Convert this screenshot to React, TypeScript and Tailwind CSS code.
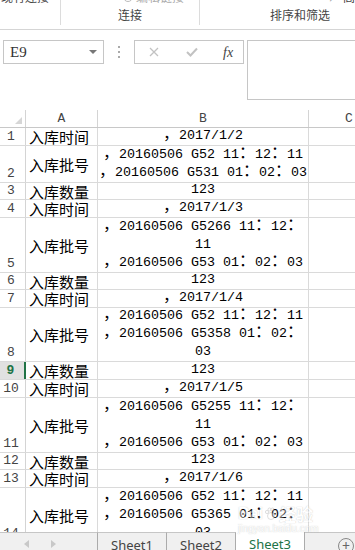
import React from "react";

type Row = { n: number; h: string; a: string; b: string[]; sel?: boolean };

const rows: Row[] = [
  { n: 1, h: "h-[18px]", a: "入库时间", b: ["，2017/1/2"] },
  { n: 2, h: "h-[37px]", a: "入库批号", b: ["，20160506 G52 11：12：11", "，20160506 G531 01：02：03"] },
  { n: 3, h: "h-[17px]", a: "入库数量", b: ["123"] },
  { n: 4, h: "h-[18px]", a: "入库时间", b: ["，2017/1/3"] },
  { n: 5, h: "h-[55px]", a: "入库批号", b: ["，20160506 G5266 11：12：", "11", "，20160506 G53 01：02：03"] },
  { n: 6, h: "h-[17px]", a: "入库数量", b: ["123"] },
  { n: 7, h: "h-[18px]", a: "入库时间", b: ["，2017/1/4"] },
  { n: 8, h: "h-[54px]", a: "入库批号", b: ["，20160506 G52 11：12：11", "，20160506 G5358 01：02：", "03"] },
  { n: 9, h: "h-[18px]", a: "入库数量", b: ["123"], sel: true },
  { n: 10, h: "h-[18px]", a: "入库时间", b: ["，2017/1/5"] },
  { n: 11, h: "h-[55px]", a: "入库批号", b: ["，20160506 G5255 11：12：", "11", "，20160506 G53 01：02：03"] },
  { n: 12, h: "h-[17px]", a: "入库数量", b: ["123"] },
  { n: 13, h: "h-[18px]", a: "入库时间", b: ["，2017/1/6"] },
  { n: 14, h: "h-[55px]", a: "入库批号", b: ["，20160506 G52 11：12：11", "，20160506 G5365 01：02：", "03"] },
];

// half-width chars in mono, full-width ones a bit bigger in the CJK font
function Line({ s }: { s: string }) {
  const parts: { wide: boolean; t: string }[] = [];
  for (const c of Array.from(s)) {
    const wide = c.charCodeAt(0) > 0xff;
    const last = parts[parts.length - 1];
    if (last && last.wide === wide) last.t += c;
    else parts.push({ wide, t: c });
  }
  return (
    <div className="h-[18px] whitespace-pre">
      {parts.map((p, i) =>
        p.wide ? (
          <span key={i} className="font-['Noto_Sans_CJK_SC',sans-serif] text-[16px] leading-[0px]">
            {p.t}
          </span>
        ) : (
          <span key={i}>{p.t}</span>
        )
      )}
    </div>
  );
}

function Ribbon() {
  return (
    <div className="flex h-[30px] shrink-0 overflow-hidden border-b border-[#d5d5d5] text-[12px] text-[#444] font-['Noto_Sans_CJK_SC',sans-serif]">
      <div className="h-[25px] w-[61px] shrink-0 border-r border-[#dcdcdc]">
        <div className="-mt-[9px] pl-[1px] leading-[12px] whitespace-nowrap">现有连接</div>
      </div>
      <div className="h-[25px] w-[139px] shrink-0 border-r border-[#dcdcdc]">
        <div className="-mt-[9px] flex items-center gap-[3px] pl-[62px] leading-[12px] whitespace-nowrap text-[#aaa]">
          <span className="inline-block h-[10px] w-[10px] rounded-full border border-[#bbb]" />
          编辑链接
        </div>
        <div className="pt-[4px] text-center leading-[16px]">连接</div>
      </div>
      <div className="h-[25px] w-[200px] shrink-0">
        <div className="-mt-[9px] flex items-center gap-[3px] pl-[128px] leading-[12px] whitespace-nowrap">
          <span className="text-[#999]">↗</span>高级
        </div>
        <div className="pt-[4px] text-center leading-[16px]">排序和筛选</div>
      </div>
    </div>
  );
}

function FormulaBar() {
  return (
    <div className="flex h-[80px] shrink-0 items-start overflow-hidden pl-[3px] pt-[10px]">
      <div className="flex h-[24px] w-[101px] shrink-0 items-center justify-between border border-[#c6c6c6] pl-[6px] pr-[6px]">
        <span className="font-['Liberation_Serif',serif] text-[15px] text-[#333]">E9</span>
        <span className="h-0 w-0 border-x-[4px] border-t-[4px] border-x-transparent border-t-[#777]" />
      </div>
      <div className="flex w-[30px] shrink-0 flex-col items-center gap-[3px] pt-[6px]">
        <span className="h-[2px] w-[2px] bg-[#aaa]" />
        <span className="h-[2px] w-[2px] bg-[#aaa]" />
        <span className="h-[2px] w-[2px] bg-[#aaa]" />
      </div>
      <div className="flex h-[24px] w-[110px] shrink-0 items-center border border-[#c6c6c6] text-[#bbb]">
        <svg className="ml-[14px]" width="10" height="10" viewBox="0 0 10 10">
          <path d="M1 1L9 9M9 1L1 9" stroke="#c2c2c2" strokeWidth="1.3" />
        </svg>
        <svg className="ml-[27px]" width="12" height="10" viewBox="0 0 12 10">
          <path d="M1 5L4.5 8.5L11 1.5" stroke="#c2c2c2" strokeWidth="2" fill="none" />
        </svg>
        <span className="ml-[25px] font-['Liberation_Serif',serif] text-[14px] italic text-[#444]">fx</span>
      </div>
      <div className="ml-[3px] h-[60px] w-[130px] shrink-0 border border-[#c6c6c6]" />
    </div>
  );
}

function Grid() {
  return (
    <div className="h-[422px] shrink-0 overflow-hidden">
      <div className="flex h-[18px] border-b border-[#c8c8c8] font-['Liberation_Mono',monospace] text-[13px] leading-[17px] text-[#444]">
        <div className="flex w-[26px] shrink-0 items-end justify-end border-r border-[#d4d4d4] pb-[3px] pr-[3px]">
          <svg width="7" height="7" viewBox="0 0 7 7">
            <path d="M7 0V7H0Z" fill="#d6d6d6" />
          </svg>
        </div>
        <div className="w-[72px] shrink-0 border-r border-[#d4d4d4] text-center">A</div>
        <div className="w-[211px] shrink-0 border-r border-[#d4d4d4] text-center">B</div>
        <div className="w-[80px] shrink-0 text-center">C</div>
      </div>
      {rows.map((r) => (
        <div key={r.n} className={`flex shrink-0 border-b border-[#dadada] ${r.h}`}>
          <div
            className={`flex w-[26px] shrink-0 items-end justify-center pr-[3px] font-['Liberation_Mono',monospace] text-[13px] leading-[17px] ${
              r.sel ? "border-r-2 border-[#217346] bg-[#e1e1e1] font-bold text-[#217346]" : "border-r border-[#d4d4d4] text-[#444]"
            }`}
          >
            {r.n}
          </div>
          <div className="flex w-[72px] shrink-0 items-center border-r border-[#dadada] pl-[3px] font-['Noto_Sans_CJK_SC',sans-serif] text-[15px] leading-[17px] text-black">
            {r.a}
          </div>
          <div className="flex w-[211px] shrink-0 flex-col items-center justify-end border-r border-[#dadada] font-['Liberation_Mono','Noto_Sans_CJK_SC',monospace] text-[13.33px] leading-[18px] text-black">
            {r.b.map((s, i) => (
              <Line key={i} s={s} />
            ))}
          </div>
          <div className="flex-1" />
        </div>
      ))}
    </div>
  );
}

function Tabs() {
  const tab = "flex h-[18px] w-[69px] shrink-0 items-center justify-center border-r border-[#ababab]";
  return (
    <div className="flex h-[18px] shrink-0 bg-[#f0f0f0] font-['Noto_Sans',sans-serif] text-[13px] leading-[18px] text-[#444]">
      <div className="flex h-[18px] w-[98px] shrink-0 items-center gap-[22px] border-r border-t border-[#c6c6c6] border-r-[#ababab] pl-[24px] pt-[5px]">
        <span className="h-0 w-0 border-y-[4px] border-r-[5px] border-y-transparent border-r-[#c8c8c8]" />
        <span className="h-0 w-0 border-y-[4px] border-l-[5px] border-y-transparent border-l-[#c8c8c8]" />
      </div>
      <div className={`${tab} border-t border-t-[#c6c6c6] pt-[6px]`}>Sheet1</div>
      <div className={`${tab} border-t border-t-[#c6c6c6] pt-[6px]`}>Sheet2</div>
      <div className={`${tab} bg-white pt-[6px] text-[#217346]`}>Sheet3</div>
      <div className="flex h-[18px] flex-1 items-start border-t border-[#c6c6c6] pl-[33px] pt-[5px]">
        <span className="flex h-[16px] w-[16px] items-center justify-center rounded-full border border-[#888] text-[14px] leading-none text-[#666]">
          +
        </span>
      </div>
    </div>
  );
}

export default function App() {
  return (
    <div className="relative h-[550px] w-[355px] overflow-hidden bg-white">
      <div className="flex h-full flex-col">
        <Ribbon />
        <FormulaBar />
        <Grid />
        <Tabs />
      </div>
      <div className="pointer-events-none absolute left-[238px] top-[505px] opacity-40 [text-shadow:0_0_1px_#666]">
        <div className="flex items-center gap-[1px] font-['Liberation_Sans',sans-serif] text-[16px] font-bold leading-[18px] text-white">
          Bai
          <svg width="14" height="14" viewBox="0 0 14 14">
            <circle cx="7" cy="9" r="3.5" fill="#fff" stroke="#777" strokeWidth="0.6" />
            <circle cx="3" cy="5" r="1.6" fill="#fff" stroke="#777" strokeWidth="0.6" />
            <circle cx="11" cy="5" r="1.6" fill="#fff" stroke="#777" strokeWidth="0.6" />
            <circle cx="5.5" cy="2.5" r="1.5" fill="#fff" stroke="#777" strokeWidth="0.6" />
            <circle cx="8.5" cy="2.5" r="1.5" fill="#fff" stroke="#777" strokeWidth="0.6" />
          </svg>
          <span className="font-['Noto_Sans_CJK_SC',sans-serif] text-[17px]">经验</span>
        </div>
        <div className="font-['Liberation_Sans',sans-serif] text-[10px] leading-[12px] text-white">jingyan.baidu.com</div>
      </div>
    </div>
  );
}
